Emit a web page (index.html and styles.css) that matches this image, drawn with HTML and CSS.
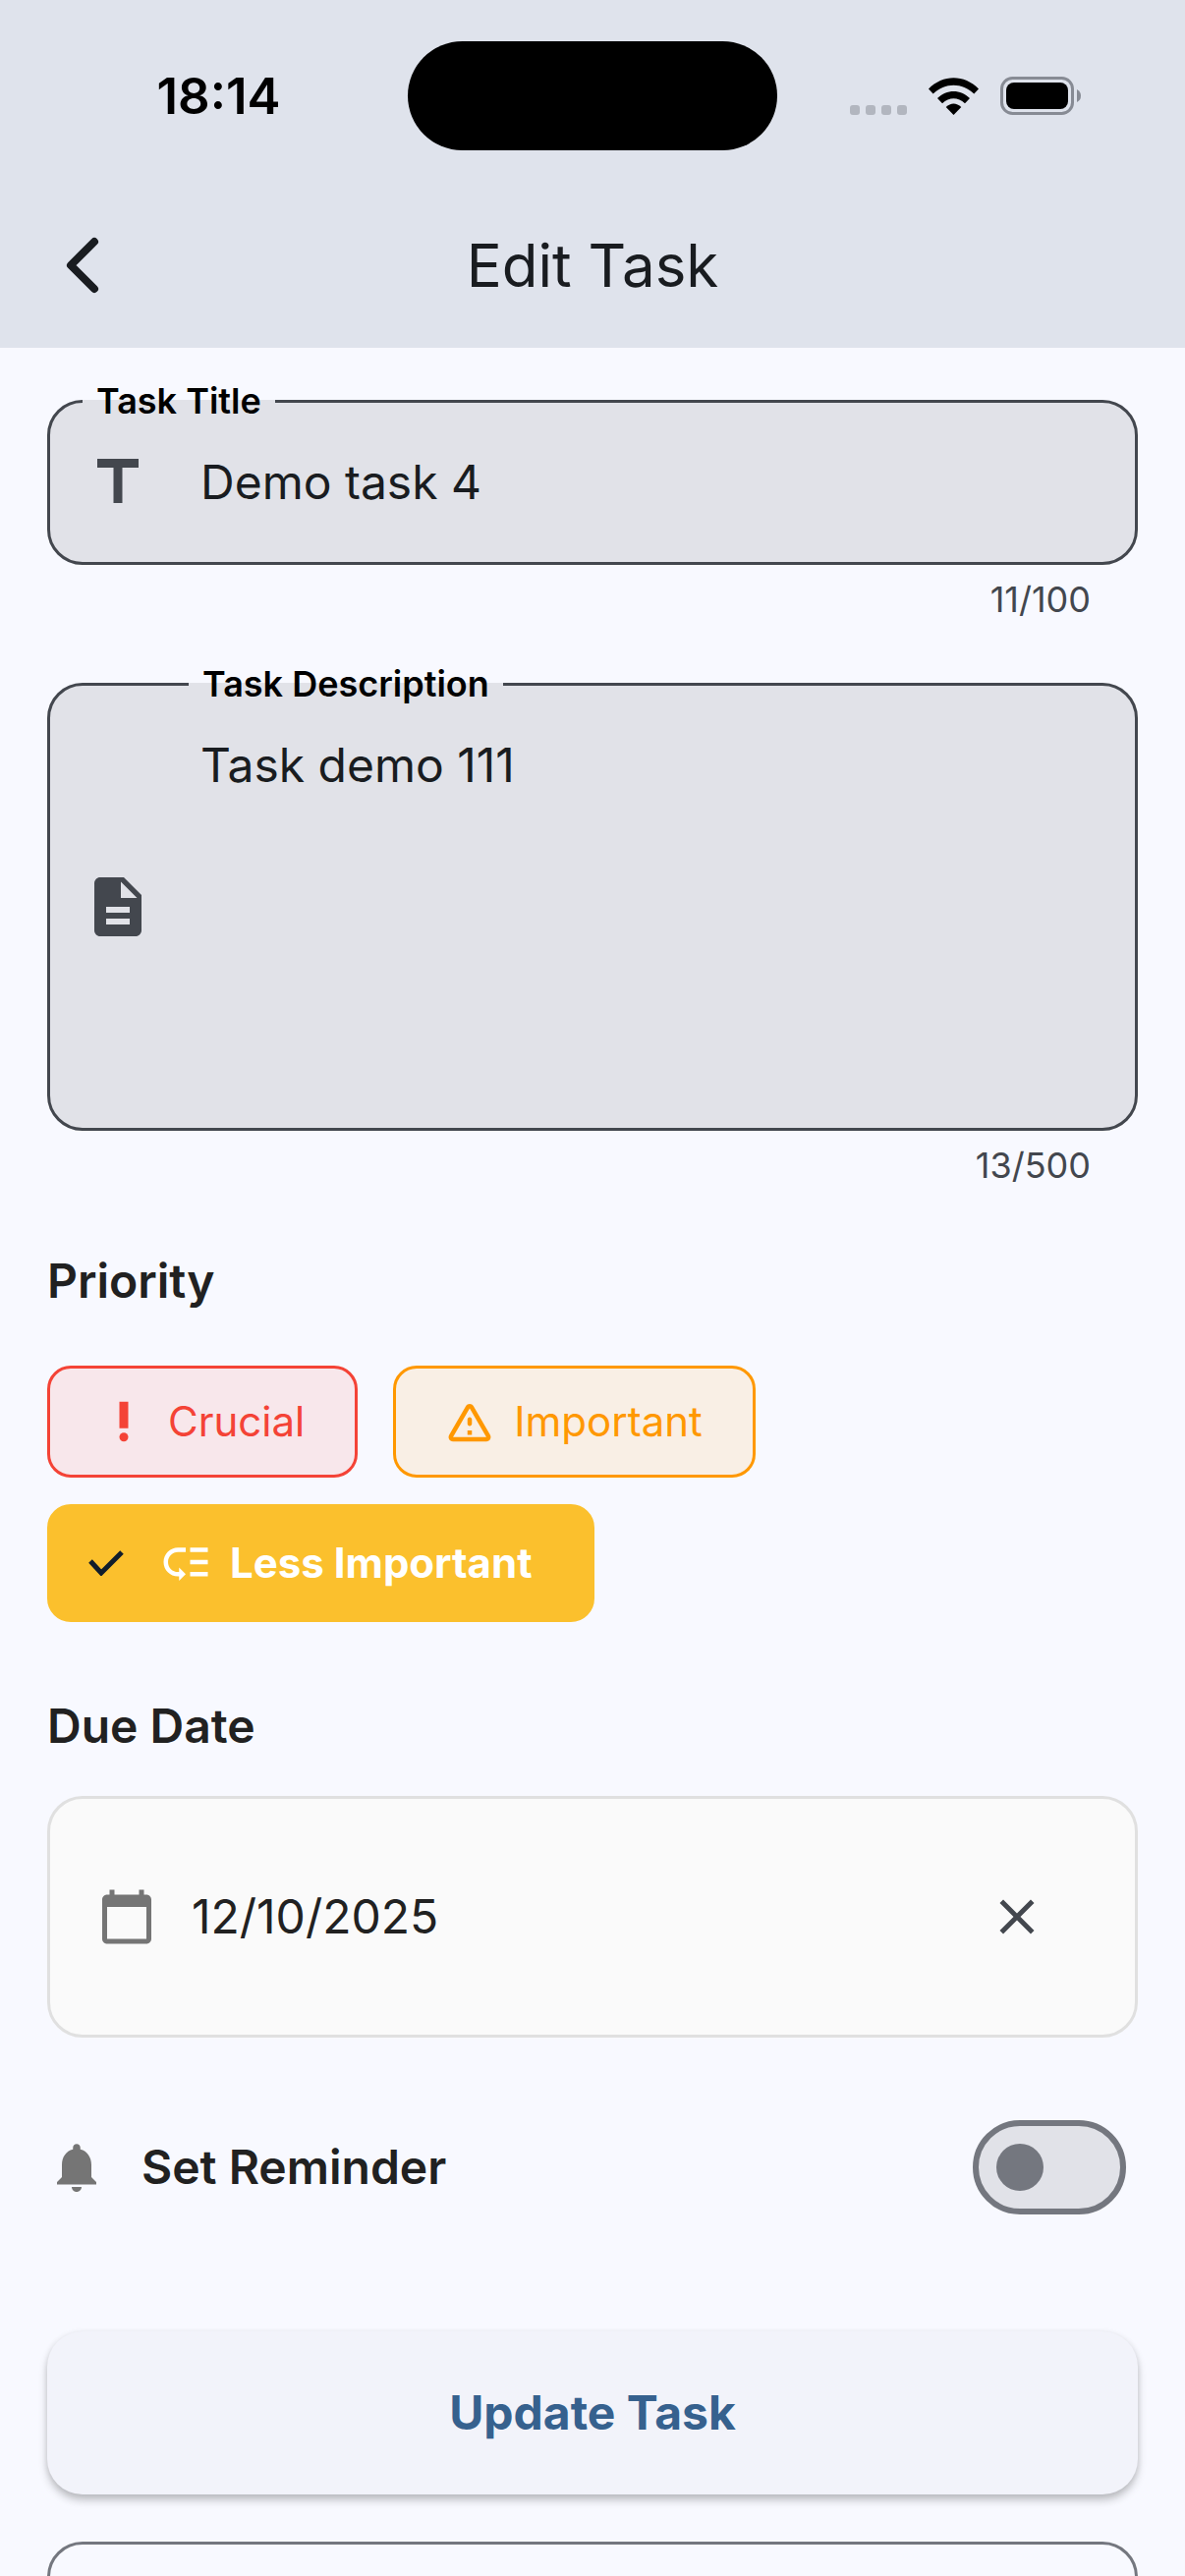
FILE: index.html
```html
<!DOCTYPE html>
<html lang="en">
<head>
<meta charset="utf-8">
<meta name="viewport" content="width=device-width, initial-scale=1">
<title>Edit Task</title>
<link rel="stylesheet" href="styles.css">
</head>
<body>
<header class="top">
  <div class="status">
    <time class="clock">18:14</time>
    <div class="island"></div>
    <div class="indicators">
      <svg class="signal" viewBox="0 0 58 10" width="58" height="10" aria-hidden="true"><rect width="10" height="10" rx="3"/><rect x="16" width="10" height="10" rx="3"/><rect x="32" width="10" height="10" rx="3"/><rect x="48" width="10" height="10" rx="3"/></svg>
      <svg class="wifi" viewBox="0 0 51 38" width="51" height="38" aria-hidden="true"><path d="M0 11.5C14.500-3.500 36.500-3.500 51 11.500L46.300 16.500C34.500 4.700 16.500 4.700 4.700 16.500Z"/><path d="M9 21C18.500 11.500 32.500 11.500 42 21L37 26.300C30 19.600 21 19.600 14 26.300Z"/><path d="M17.700 30C22.500 25.300 28.500 25.300 33.300 30L25.500 38Z"/></svg>
      <svg class="battery" viewBox="0 0 82 39" width="82" height="39" aria-hidden="true"><rect class="shell" x="1.500" y="1.500" width="72" height="36" rx="11"/><rect x="6" y="6" width="63" height="27" rx="8"/><path class="nub" d="M78 13Q82 15 82 19.500Q82 24 78 26Z"/></svg>
    </div>
  </div>
  <div class="toolbar">
    <button class="back" type="button" aria-label="Back"><svg viewBox="0 0 34 58" width="34" height="58"><path d="M29 5L5 29L29 53"/></svg></button>
    <h1 class="title">Edit Task</h1>
  </div>
</header>

<main class="page">
  <form class="form">
    <div class="field">
      <fieldset class="box">
        <legend class="legend"><label for="task-title">Task Title</label></legend>
        <div class="row">
          <svg class="icon-lg" viewBox="0 0 24 24" aria-hidden="true"><path d="M5 4v3h5.500v12h3V7H19V4z"/></svg>
          <input class="control" id="task-title" type="text" value="Demo task 4">
        </div>
      </fieldset>
      <p class="counter">11/100</p>
    </div>

    <div class="field">
      <fieldset class="box">
        <legend class="legend legend-inset"><label for="task-desc">Task Description</label></legend>
        <div class="row">
          <svg class="icon-lg" viewBox="0 0 24 24" aria-hidden="true"><path d="M14 2H6c-1.100 0-1.990.9-1.990 2L4 20c0 1.100.89 2 1.990 2H18c1.100 0 2-.9 2-2V8l-6-6zm2 16H8v-2h8v2zm0-4H8v-2h8v2zm-3-5V3.500L18.500 9H13z"/></svg>
          <textarea class="control" id="task-desc" rows="5">Task demo 111</textarea>
        </div>
      </fieldset>
      <p class="counter">13/500</p>
    </div>

    <h2 class="heading" id="priority">Priority</h2>
    <div class="chips" role="radiogroup" aria-labelledby="priority">
      <label class="chip crucial"><input class="hidden" type="radio" name="priority">
        <svg class="icon-sm" viewBox="0 0 24 24" aria-hidden="true"><circle cx="12" cy="19" r="2"/><path d="M10 3h4v12h-4z"/></svg>
        <span>Crucial</span></label>
      <label class="chip important"><input class="hidden" type="radio" name="priority">
        <svg class="icon-sm" viewBox="0 0 24 24" aria-hidden="true"><path d="M12 5.990L19.530 19H4.470L12 5.990M2.740 18c-.77 1.330.19 3 1.730 3h15.060c1.540 0 2.500-1.670 1.730-3L13.730 4.990c-.77-1.330-2.690-1.330-3.460 0L2.740 18zM11 11v2c0 .55.45 1 1 1s1-.45 1-1v-2c0-.55-.45-1-1-1s-1 .45-1 1zm0 5h2v2h-2z"/></svg>
        <span>Important</span></label>
      <label class="chip less"><input class="hidden" type="radio" name="priority" checked>
        <svg class="check" viewBox="0 0 36 26" width="36" height="26" aria-hidden="true"><path d="M2 11L13 23L34 2"/></svg>
        <svg class="icon-sm" viewBox="0 0 24 24" aria-hidden="true"><path d="M14 5h8v2h-8zm0 5.500h8v2h-8zm0 5.500h8v2h-8zM2 11.500C2 15.080 4.920 18 8.500 18H9v2l3-3-3-3v2h-.5C6.020 16 4 13.980 4 11.500S6.020 7 8.500 7H12V5H8.500C4.920 5 2 7.920 2 11.500z"/></svg>
        <span>Less Important</span></label>
    </div>

    <h2 class="heading heading-date"><label for="due">Due Date</label></h2>
    <div class="date">
      <svg class="icon-md" viewBox="0 0 24 24" aria-hidden="true"><path d="M20 3h-1V1h-2v2H7V1H5v2H4c-1.100 0-2 .9-2 2v16c0 1.100.9 2 2 2h16c1.100 0 2-.9 2-2V5c0-1.100-.9-2-2-2zm0 18H4V8h16v13z"/></svg>
      <input class="control date-text" id="due" type="text" value="12/10/2025">
      <button class="clear" type="button" aria-label="Clear date"><svg class="icon-md" viewBox="0 0 24 24"><path d="M19 6.410L17.590 5 12 10.590 6.410 5 5 6.410 10.590 12 5 17.590 6.410 19 12 13.410 17.590 19 19 17.590 13.410 12z"/></svg></button>
    </div>

    <div class="reminder">
      <svg class="icon-md" viewBox="0 0 24 24" aria-hidden="true"><path d="M12 22c1.100 0 2-.9 2-2h-4c0 1.100.89 2 2 2zm6-6v-5c0-3.070-1.640-5.640-4.500-6.320V4c0-.83-.67-1.500-1.500-1.500s-1.500.67-1.500 1.500v.68C7.630 5.360 6 7.920 6 11v5l-2 2v1h16v-1l-2-2z"/></svg>
      <label class="heading reminder-label" for="remind">Set Reminder</label>
      <input class="switch" id="remind" type="checkbox" role="switch">
    </div>

    <button class="action primary" type="submit">Update Task</button>
    <button class="action outlined" type="button" aria-label="Cancel"></button>
  </form>
</main>
</body>
</html>
```
FILE: styles.css
```css
* { box-sizing: border-box; }

body {
  margin: 0;
  height: 100vh;
  display: flex;
  flex-direction: column;
  background: #f8f9ff;
  color: #191c20;
  font-family: Inter, "Liberation Sans", sans-serif;
  font-size: 48px;
  line-height: 72px;
}

button, input, textarea { font: inherit; color: inherit; }
button { cursor: pointer; }
svg { display: block; flex: none; fill: currentColor; }
h1, h2, p { margin: 0; }

/* Header */
.top { flex: none; background: #dfe3ec; }

.status {
  display: grid;
  grid-template-columns: 1fr 376px 1fr;
  align-items: center;
  padding: 42px 0 33px;
  color: #000;
}
.clock {
  padding-left: 30px;
  text-align: center;
  font-size: 51px;
  font-weight: 600;
}
.island { height: 111px; border-radius: 56px; background: #000; }
.indicators {
  display: flex;
  justify-content: center;
  align-items: center;
  gap: 22px;
  padding-right: 32px;
}
.signal { align-self: flex-end; color: #b2b6bf; }
.shell { fill: none; stroke: #878b94; stroke-width: 3px; }
.nub { fill: #878b94; }

.toolbar {
  display: grid;
  grid-template-columns: 168px 1fr 168px;
  align-items: center;
  height: 168px;
}
.back {
  display: grid;
  place-items: center;
  height: 144px;
  padding: 0;
  border: 0;
  background: none;
}
.back path {
  fill: none;
  stroke: currentColor;
  stroke-width: 8px;
  stroke-linecap: round;
  stroke-linejoin: round;
}
.title { text-align: center; font-size: 60px; font-weight: 400; }

/* Form */
.page {
  flex: 1;
  min-height: 0;
  overflow-y: auto;
  scrollbar-width: none;
  padding: 30px 48px 48px;
}
.form { display: flex; flex-direction: column; }

.field { margin-bottom: 38px; }
.box {
  min-width: 0;
  margin: 0;
  padding: 23px 45px 45px 33px;
  border: 3px solid #43474e;
  border-radius: 36px;
  background: #e1e2e8;
}
.legend {
  padding: 0 14px;
  color: #000;
  font-size: 36px;
  font-weight: 600;
  line-height: 48px;
}
.legend-inset { margin-left: 108px; }
.row { display: flex; align-items: center; gap: 48px; }
.icon-lg { width: 72px; height: 72px; color: #43474e; }
.icon-md { width: 60px; height: 60px; color: #757575; }
.icon-sm { width: 54px; height: 54px; }

.control {
  display: block;
  flex: 1;
  min-width: 0;
  height: 72px;
  margin: 0;
  padding: 0;
  border: 0;
  outline: 0;
  background: none;
  resize: none;
}
textarea.control { height: auto; overflow: hidden; }

.counter {
  margin-top: 11px;
  padding-right: 48px;
  text-align: right;
  color: #43474e;
  font-size: 36px;
  line-height: 48px;
}

.heading {
  margin-top: 20px;
  color: #212121;
  font-size: 48px;
  font-weight: 600;
}
.heading-date { margin-top: 70px; }

/* Priority chips */
.chips { display: flex; flex-wrap: wrap; gap: 27px 36px; margin-top: 50px; }
.chip {
  position: relative;
  display: flex;
  align-items: center;
  gap: 18px;
  height: 114px;
  padding: 0 51px 0 48px;
  border: 3px solid;
  border-radius: 24px;
  font-size: 42px;
}
.crucial { color: #f44336; background: #f8e7eb; }
.important { color: #ff9800; background: #f9efe5; }
.less {
  height: 120px;
  padding-left: 39px;
  padding-right: 60px;
  border-color: #fbc02d;
  background: #fbc02d;
  color: #fff;
  font-weight: 700;
}
.check {
  margin-right: 18px;
  fill: none;
  stroke: #111d2b;
  stroke-width: 5px;
}
.hidden {
  position: absolute;
  inset: 0;
  margin: 0;
  opacity: 0;
}

/* Due date */
.date {
  display: flex;
  align-items: center;
  margin-top: 35px;
  padding: 48px;
  border: 3px solid #e0e0e0;
  border-radius: 36px;
  background: #fafafa;
}
.date-text { margin-left: 36px; color: #212121; }
.clear {
  display: grid;
  place-items: center;
  width: 144px;
  height: 144px;
  padding: 0;
  border: 0;
  background: none;
}
.clear .icon-md { color: #43474e; }

/* Reminder */
.reminder {
  display: flex;
  align-items: center;
  gap: 36px;
  margin-top: 84px;
  padding-right: 12px;
}
.reminder-label { flex: 1; margin: 0; }
.switch {
  appearance: none;
  display: flex;
  align-items: center;
  width: 156px;
  height: 96px;
  margin: 0;
  padding: 0 18px;
  border: 6px solid #74777f;
  border-radius: 48px;
  background: #e1e2e8;
}
.switch::before {
  content: "";
  width: 48px;
  height: 48px;
  border-radius: 50%;
  background: #74777f;
}
.switch:checked { justify-content: flex-end; }

/* Actions */
.action {
  height: 166px;
  border-radius: 36px;
  color: #36618e;
  font-weight: 700;
}
.primary {
  margin-top: 119px;
  border: 0;
  background: #f2f3fa;
  box-shadow: 0 6px 9px rgba(0, 0, 0, 0.22), 0 1px 6px rgba(0, 0, 0, 0.08);
}
.outlined {
  margin-top: 48px;
  border: 3px solid #74777f;
  background: none;
}
```
